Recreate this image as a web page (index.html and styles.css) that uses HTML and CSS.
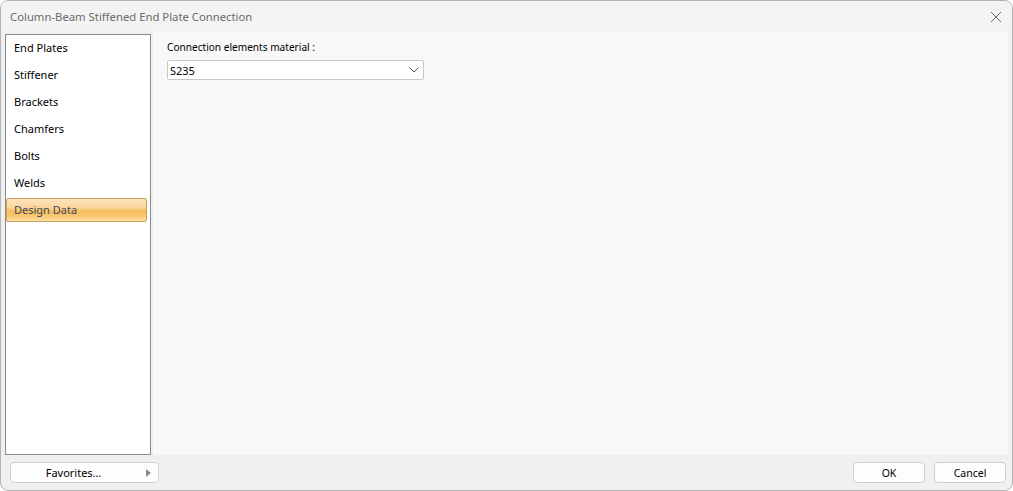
FILE: index.html
```html
<!DOCTYPE html>
<html>
<head>
<meta charset="utf-8">
<link rel="stylesheet" href="styles.css">
</head>
<body>
<div class="window">
  <div class="titlebar">
    <span class="title">Column-Beam Stiffened End Plate Connection</span>
    <svg class="close" width="12" height="12" viewBox="0 0 12 12"><path d="M1 1 L11 11 M11 1 L1 11" stroke="#6a6a6a" stroke-width="1" fill="none"/></svg>
  </div>
  <div class="main">
    <div class="side">
      <ul class="list">
        <li class="item">End Plates</li>
        <li class="item">Stiffener</li>
        <li class="item">Brackets</li>
        <li class="item">Chamfers</li>
        <li class="item">Bolts</li>
        <li class="item">Welds</li>
        <li class="item selected">Design Data</li>
      </ul>
    </div>
    <div class="content">
      <div class="label">Connection elements material :</div>
      <div class="combo">
        <span>S235</span>
        <svg width="10" height="6" viewBox="0 0 10 6"><path d="M0.5 0.5 L5 5 L9.5 0.5" stroke="#555" stroke-width="1" fill="none"/></svg>
      </div>
    </div>
  </div>
  <div class="footer">
    <div class="btn fav">Favorites…<svg class="tri" width="5" height="8" viewBox="0 0 5 8"><path d="M0 0 L5 4 L0 8 Z" fill="#8a8a8a"/></svg></div>
    <div class="right-btns">
      <div class="btn">OK</div>
      <div class="btn">Cancel</div>
    </div>
  </div>
</div>
</body>
</html>
```
FILE: styles.css
```css
html, body { margin: 0; padding: 0; background: #ffffff; }
body { font-family: "Noto Sans", "Open Sans", sans-serif; font-size: 11px; color: #000; }
.window {
  width: 1013px; height: 491px; box-sizing: border-box;
  border: 1px solid #b4b4b4; border-radius: 8px; overflow: hidden;
  background: #f0f0f0; display: flex; flex-direction: column;
}
.titlebar {
  height: 30px; flex: none; background: #f3f3f3;
  display: flex; align-items: center; justify-content: space-between;
  padding: 0 10px 0 9px;
}
.title { color: #6b6b6b; font-size: 11.3px; }
.close { margin-top: 1px; }
.main { flex: 1; display: flex; min-height: 0; }
.side { width: 146px; padding: 3px 0 0 4px; flex: none; }
.list {
  list-style: none; margin: 0; padding: 1px 0 0 0;
  height: 100%; box-sizing: border-box;
  background: #fff; border: 1px solid #8a8a8a;
}
.item { height: 27px; line-height: 24px; padding-left: 8px; margin: 0 3px 0 0; }
.selected {
  padding-left: 7px; height: 24px; line-height: 22px; box-sizing: border-box;
  border: 1px solid #c9a05e; border-radius: 2px; color: #3e4a5a;
  background: linear-gradient(to bottom, #fde3bd 0%, #fbd59a 40%, #f7be5c 55%, #f9c978 80%, #fde19f 100%);
}
.content {
  flex: 1; background: #f8f8f8; margin: 0 4px 0 1px;
  padding: 9px 14px; border-left: 1px solid #ececec;
}
.label { height: 18px; line-height: 14px; font-size: 10.1px; }
.combo {
  width: 257px; height: 20px; box-sizing: border-box; margin-top: 2px;
  background: #fff; border: 1px solid #c8c8c8; border-radius: 2px;
  display: flex; align-items: center; justify-content: space-between;
  padding: 0 4px 0 2px;
}
.footer {
  height: 35px; flex: none; display: flex; align-items: center; justify-content: space-between;
  padding: 0 6px 0 9px;
}
.btn {
  height: 21px; width: 72px; box-sizing: border-box;
  background: #fdfdfd; border: 1px solid #d0d0d0; border-radius: 4px;
  display: flex; align-items: center; justify-content: center;
  font-size: 10.5px;
}
.fav { width: 149px; position: relative; font-size: 11px; padding-right: 22px; }
.tri { position: absolute; right: 7px; top: 6px; }
.right-btns { display: flex; gap: 9px; }
```
